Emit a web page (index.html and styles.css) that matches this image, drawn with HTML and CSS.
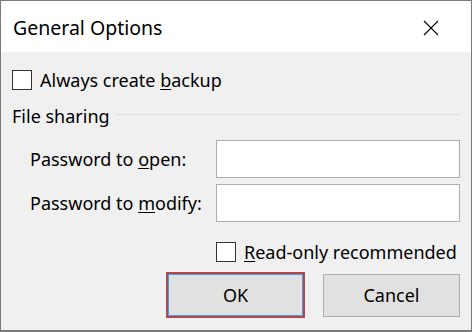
FILE: index.html
```html
<!DOCTYPE html>
<html lang="en">
<head>
  <meta charset="UTF-8">
  <title>General Options</title>
  <link rel="stylesheet" href="styles.css">
</head>
<body>
  <div class="dialog">
    <div class="titlebar">
      <span class="title">General Options</span>
      <span class="close">
        <svg width="16" height="16" viewBox="0 0 16 16">
          <path d="M1 1 L15 15 M15 1 L1 15" stroke="#000" stroke-width="1.1" fill="none"/>
        </svg>
      </span>
    </div>

    <div class="options">
      <label class="check-row">
        <span class="box"></span>
        <span>Always create <u>b</u>ackup</span>
      </label>

      <div class="section-head">
        <span>File sharing</span>
        <span class="rule"></span>
      </div>

      <div class="fields">
        <span class="field-label">Password to <u>o</u>pen:</span>
        <span class="input"></span>
        <span class="field-label">Password to <u>m</u>odify:</span>
        <span class="input"></span>
        <label class="check-row readonly">
          <span class="box"></span>
          <span><u>R</u>ead-only recommended</span>
        </label>
      </div>

      <div class="buttons">
        <button class="button default"><span class="inner">OK</span></button>
        <button class="button">Cancel</button>
      </div>
    </div>
  </div>
</body>
</html>
```

FILE: styles.css
```css
/* Reset */
body, html {
  margin: 0;
  padding: 0;
  font-family: 'Noto Sans', 'Open Sans', sans-serif;
  color: #000;
  background: #f0f0f0;
}

.dialog {
  width: 472px;
  height: 332px;
  box-sizing: border-box;
  border: 1px solid #7a7a7a;
  border-bottom-width: 2px;
  background: #f0f0f0;
  display: flex;
  flex-direction: column;
}

.titlebar {
  height: 51px;
  background: #fff;
  display: flex;
  align-items: center;
  justify-content: space-between;
  padding: 0 32px 0 12px;
}

.title {
  font-size: 19.5px;
  margin-top: 2px;
}

.close {
  display: flex;
  margin-top: 2px;
}

.options {
  padding: 18px 11px 0 11px;
  font-size: 18px;
}

.check-row {
  display: flex;
  align-items: center;
  gap: 8px;
  height: 20px;
}

.box {
  flex: none;
  width: 20px;
  height: 20px;
  box-sizing: border-box;
  border: 1px solid #333;
  background: #fff;
}

u {
  text-underline-offset: 2px;
}

.section-head {
  margin-top: 16px;
  height: 20px;
  display: flex;
  align-items: center;
  gap: 6px;
}

.section-head .rule {
  flex: 1;
  height: 1px;
  background: #dcdcdc;
  margin-top: -4px;
}

.fields {
  margin-top: 14px;
  display: grid;
  grid-template-columns: 186px 244px;
  grid-auto-rows: 38px;
  row-gap: 6px;
  padding-left: 18px;
  align-items: center;
}

.field-label {
  white-space: nowrap;
}

.input {
  height: 38px;
  box-sizing: border-box;
  border: 1px solid #adadad;
  background: #fff;
}

.readonly {
  grid-column: 2;
  height: 20px;
  margin-top: 14px;
  align-self: start;
  white-space: nowrap;
}

.buttons {
  margin-top: 6px;
  display: flex;
  justify-content: flex-end;
  align-items: center;
  gap: 18px;
}

.button {
  width: 137px;
  height: 43px;
  box-sizing: border-box;
  border: 1px solid #adadad;
  background: #e1e1e1;
  font-family: inherit;
  font-size: 18px;
  color: #000;
  padding: 0;
}

.button.default {
  width: 139px;
  height: 46px;
  border: 2px solid #b3474c;
  display: flex;
}

.button .inner {
  flex: 1;
  display: flex;
  align-items: center;
  justify-content: center;
  border: 1px solid #4a9be0;
}
```
